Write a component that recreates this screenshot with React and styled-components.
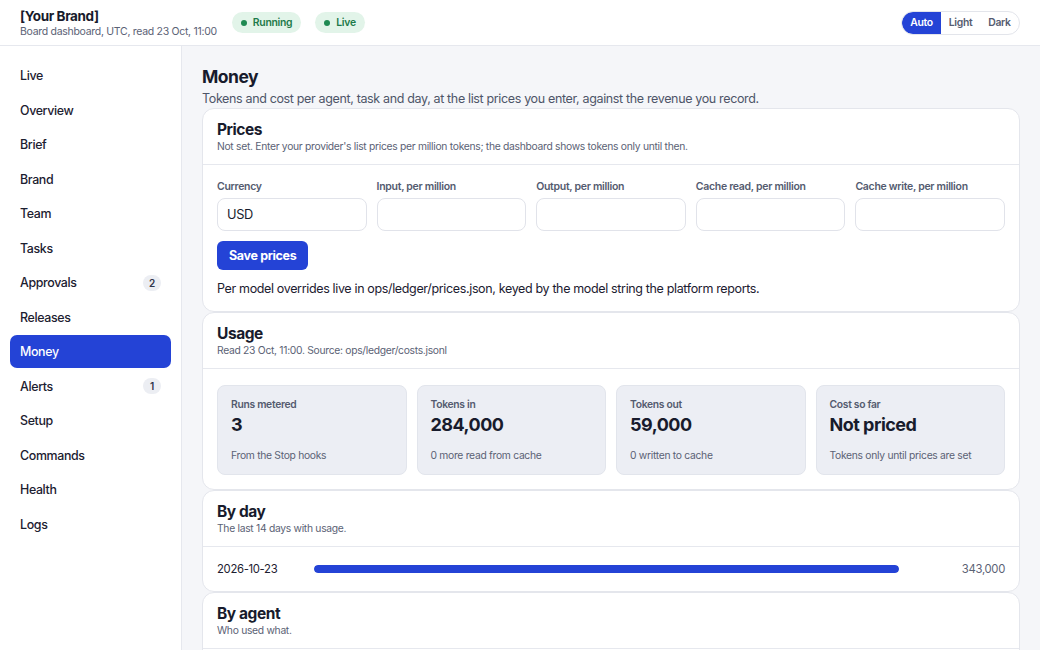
import React from "react";
import styled, { createGlobalStyle } from "styled-components";

const Global = createGlobalStyle`
  * { box-sizing: border-box; letter-spacing: -0.028em; }
  html, body { margin: 0; padding: 0; }
  body {
    font-family: Inter, "Noto Sans", "Liberation Sans", sans-serif;
    color: #181b2c;
    background: #f5f6f9;
    -webkit-font-smoothing: antialiased;
  }
`;

const BLUE = "#2443d6";

const Shell = styled.div`
  width: 1040px;
  height: 650px;
  display: flex;
  flex-direction: column;
  overflow: hidden;
`;

const TopBar = styled.header`
  height: 46px;
  flex: none;
  display: flex;
  align-items: center;
  padding: 0 20px;
  background: #fff;
  border-bottom: 1px solid #e6e8ee;
`;

const BrandBlock = styled.div`
  display: flex;
  flex-direction: column;
`;

const BrandName = styled.div`
  font-size: 13.5px;
  font-weight: 700;
  line-height: 16px;
  color: #181b2c;
`;

const BrandSub = styled.div`
  font-size: 10.5px;
  line-height: 13px;
  color: #5b6275;
  margin-top: 1px;
`;

const Pills = styled.div`
  display: flex;
  gap: 14px;
  margin-left: 15px;
`;

const Pill = styled.span`
  display: inline-flex;
  align-items: center;
  gap: 6px;
  height: 21px;
  padding: 0 9px;
  border-radius: 999px;
  background: #e2f4e9;
  color: #1d7a4a;
  font-size: 10.4px;
  font-weight: 600;
  &::before {
    content: "";
    width: 6px;
    height: 6px;
    border-radius: 50%;
    background: #1f8a52;
  }
`;

const Toggle = styled.div`
  margin-left: auto;
  display: flex;
  height: 24px;
  border: 1px solid #e3e5eb;
  border-radius: 999px;
  overflow: hidden;
  background: #fff;
`;

const ToggleBtn = styled.button`
  border: none;
  margin: 0;
  padding: 0 ${(p) => (p.$first ? "8px" : "7px")};
  font-family: inherit;
  font-size: 10.4px;
  font-weight: 600;
  background: ${(p) => (p.$active ? BLUE : "transparent")};
  color: ${(p) => (p.$active ? "#fff" : "#555c70")};
  border-radius: ${(p) => (p.$first ? "999px 0 0 999px" : "0")};
  min-width: 39px;
`;

const Body = styled.div`
  flex: 1;
  display: flex;
  min-height: 0;
`;

const Sidebar = styled.nav`
  width: 182px;
  flex: none;
  background: #fff;
  border-right: 1px solid #e6e8ee;
  padding: 13px 10px;
  display: flex;
  flex-direction: column;
  gap: 1.5px;
`;

const NavItem = styled.div`
  height: 33px;
  display: flex;
  align-items: center;
  justify-content: space-between;
  padding: 0 10px;
  border-radius: 7px;
  font-size: 12.4px;
  font-weight: 500;
  color: ${(p) => (p.$active ? "#fff" : "#1c2030")};
  background: ${(p) => (p.$active ? BLUE : "transparent")};
`;

const Badge = styled.span`
  min-width: 18px;
  height: 16px;
  padding: 0 5px;
  border-radius: 999px;
  background: #eceef3;
  color: #30354a;
  font-size: 10px;
  font-weight: 600;
  display: inline-flex;
  align-items: center;
  justify-content: center;
`;

const Main = styled.main`
  flex: 1;
  min-width: 0;
  padding: 20px 20px 0;
  display: flex;
  flex-direction: column;
  overflow: hidden;
`;

const PageTitle = styled.h1`
  margin: 0;
  font-size: 17.5px;
  line-height: 22px;
  font-weight: 700;
  color: #181b2c;
`;

const PageSub = styled.p`
  margin: 2px 0 0;
  font-size: 12.5px;
  line-height: 17px;
  color: #4e5568;
`;

const Intro = styled.div`
  margin-bottom: 1px;
`;

const Card = styled.section`
  flex: none;
  background: #fff;
  border: 1px solid #e4e6ec;
  border-radius: 12px;
`;

const CardHead = styled.div`
  padding: 11px 14px 11px;
  border-bottom: 1px solid #e6e8ee;
`;

const CardTitle = styled.h2`
  margin: 0;
  font-size: 15.5px;
  line-height: 19px;
  font-weight: 700;
  color: #181b2c;
`;

const CardSub = styled.div`
  font-size: 10.3px;
  line-height: 14px;
  color: #5b6275;
`;

const CardBody = styled.div`
  padding: ${(p) => p.$pad || "15px 14px"};
`;

const FieldGrid = styled.div`
  display: grid;
  grid-template-columns: repeat(5, 1fr);
  gap: 10px;
`;

const Field = styled.label`
  display: flex;
  flex-direction: column;
  gap: 4px;
`;

const FieldLabel = styled.span`
  font-size: 10.5px;
  line-height: 14px;
  font-weight: 600;
  color: #545b6f;
`;

const Input = styled.input`
  height: 33px;
  width: 100%;
  border: 1px solid #e1e3ea;
  border-radius: 8px;
  padding: 0 9px;
  font-family: inherit;
  font-size: 12.8px;
  color: #181b2c;
  background: #fff;
  outline: none;
`;

const Button = styled.button`
  margin-top: 10px;
  height: 29px;
  padding: 0 12px;
  border: none;
  border-radius: 6px;
  background: ${BLUE};
  color: #fff;
  font-family: inherit;
  font-size: 12.5px;
  font-weight: 700;
`;

const Note = styled.p`
  margin: 10px 0 0;
  font-size: 12.5px;
  line-height: 18px;
  color: #1c2030;
`;

const StatGrid = styled.div`
  display: grid;
  grid-template-columns: repeat(4, 1fr);
  gap: 10px;
`;

const Stat = styled.div`
  background: #eceef4;
  border: 1px solid #e2e5ec;
  border-radius: 8px;
  padding: 12px 13px 12px;
`;

const StatLabel = styled.div`
  font-size: 10.3px;
  line-height: 13px;
  font-weight: 600;
  color: #545b6f;
`;

const StatValue = styled.div`
  margin-top: 2px;
  font-size: 18px;
  line-height: 24px;
  font-weight: 700;
  color: #181b2c;
`;

const StatSub = styled.div`
  margin-top: 12px;
  font-size: 10.3px;
  line-height: 13px;
  color: #5b6275;
`;

const DayRow = styled.div`
  display: grid;
  grid-template-columns: 81px 1fr 90px;
  gap: 16px;
  align-items: center;
  height: 44px;
  padding: 0 14px;
`;

const DayLabel = styled.span`
  font-size: 11.3px;
  color: #1c2030;
`;

const Track = styled.div`
  height: 8px;
  border-radius: 4px;
  background: #e8ebf5;
  overflow: hidden;
`;

const Fill = styled.div`
  height: 100%;
  border-radius: 4px;
  background: ${BLUE};
`;

const DayValue = styled.span`
  font-size: 11.3px;
  color: #5b6275;
  text-align: right;
`;

const nav = [
  ["Live"],
  ["Overview"],
  ["Brief"],
  ["Brand"],
  ["Team"],
  ["Tasks"],
  ["Approvals", 2],
  ["Releases"],
  ["Money"],
  ["Alerts", 1],
  ["Setup"],
  ["Commands"],
  ["Health"],
  ["Logs"],
];

const fields = [
  ["Currency", "USD"],
  ["Input, per million", ""],
  ["Output, per million", ""],
  ["Cache read, per million", ""],
  ["Cache write, per million", ""],
];

const stats = [
  ["Runs metered", "3", "From the Stop hooks"],
  ["Tokens in", "284,000", "0 more read from cache"],
  ["Tokens out", "59,000", "0 written to cache"],
  ["Cost so far", "Not priced", "Tokens only until prices are set"],
];

const days = [["2026-10-23", 343000]];
const maxDay = Math.max(...days.map((d) => d[1]));

export default function App() {
  return (
    <Shell>
      <Global />
      <TopBar>
        <BrandBlock>
          <BrandName>[Your Brand]</BrandName>
          <BrandSub>Board dashboard, UTC, read 23 Oct, 11:00</BrandSub>
        </BrandBlock>
        <Pills>
          <Pill>Running</Pill>
          <Pill>Live</Pill>
        </Pills>
        <Toggle>
          <ToggleBtn $active $first>Auto</ToggleBtn>
          <ToggleBtn>Light</ToggleBtn>
          <ToggleBtn>Dark</ToggleBtn>
        </Toggle>
      </TopBar>
      <Body>
        <Sidebar>
          {nav.map(([label, count]) => (
            <NavItem key={label} $active={label === "Money"}>
              <span>{label}</span>
              {count ? <Badge>{count}</Badge> : null}
            </NavItem>
          ))}
        </Sidebar>
        <Main>
          <Intro>
            <PageTitle>Money</PageTitle>
            <PageSub>
              Tokens and cost per agent, task and day, at the list prices you enter, against the revenue you record.
            </PageSub>
          </Intro>

          <Card>
            <CardHead>
              <CardTitle>Prices</CardTitle>
              <CardSub>
                Not set. Enter your provider's list prices per million tokens; the dashboard shows tokens only until then.
              </CardSub>
            </CardHead>
            <CardBody $pad="15px 14px 13px">
              <FieldGrid>
                {fields.map(([label, value]) => (
                  <Field key={label}>
                    <FieldLabel>{label}</FieldLabel>
                    <Input defaultValue={value} />
                  </Field>
                ))}
              </FieldGrid>
              <Button>Save prices</Button>
              <Note>
                Per model overrides live in ops/ledger/prices.json, keyed by the model string the platform reports.
              </Note>
            </CardBody>
          </Card>

          <Card>
            <CardHead>
              <CardTitle>Usage</CardTitle>
              <CardSub>Read 23 Oct, 11:00. Source: ops/ledger/costs.jsonl</CardSub>
            </CardHead>
            <CardBody $pad="16px 14px 14px">
              <StatGrid>
                {stats.map(([label, value, sub]) => (
                  <Stat key={label}>
                    <StatLabel>{label}</StatLabel>
                    <StatValue>{value}</StatValue>
                    <StatSub>{sub}</StatSub>
                  </Stat>
                ))}
              </StatGrid>
            </CardBody>
          </Card>

          <Card>
            <CardHead>
              <CardTitle>By day</CardTitle>
              <CardSub>The last 14 days with usage.</CardSub>
            </CardHead>
            {days.map(([day, n]) => (
              <DayRow key={day}>
                <DayLabel>{day}</DayLabel>
                <Track>
                  <Fill style={{ width: `${(n / maxDay) * 100}%` }} />
                </Track>
                <DayValue>{n.toLocaleString("en-US")}</DayValue>
              </DayRow>
            ))}
          </Card>

          <Card>
            <CardHead>
              <CardTitle>By agent</CardTitle>
              <CardSub>Who used what.</CardSub>
            </CardHead>
            <CardBody $pad="40px 14px" />
          </Card>
        </Main>
      </Body>
    </Shell>
  );
}
